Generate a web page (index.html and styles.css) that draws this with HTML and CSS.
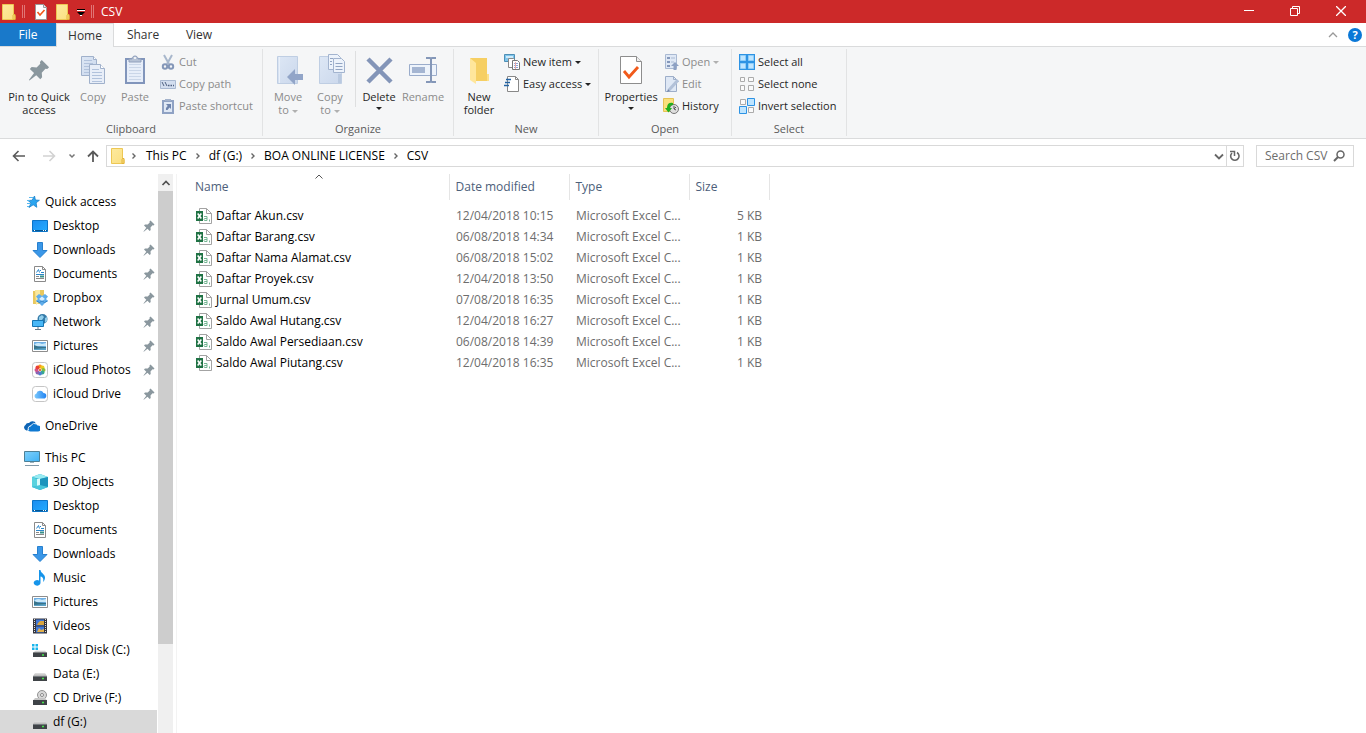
FILE: index.html
```html
<!DOCTYPE html>
<html lang="en">
<head>
<meta charset="utf-8">
<title>CSV</title>
<link rel="stylesheet" href="styles.css">
</head>
<body>
<svg class="sprite" aria-hidden="true">
  <defs>
    <linearGradient id="gPage" x1="0" y1="0" x2="1" y2="1"><stop offset="0" stop-color="#dde7f5"/><stop offset="1" stop-color="#cbd8ec"/></linearGradient>
    <linearGradient id="gFold" x1="0" y1="0" x2="1" y2="1"><stop offset="0" stop-color="#fdea9e"/><stop offset="1" stop-color="#fbdf80"/></linearGradient>
    <linearGradient id="gBlue" x1="0" y1="0" x2="1" y2="1"><stop offset="0" stop-color="#1b8df0"/><stop offset="1" stop-color="#24acff"/></linearGradient>
    <linearGradient id="gScreen" x1="0" y1="0" x2="1" y2="1"><stop offset="0" stop-color="#7fd0fb"/><stop offset="1" stop-color="#3fb2f5"/></linearGradient>
    <linearGradient id="gCloud" x1="0" y1="0" x2="1" y2="0"><stop offset="0" stop-color="#7cc9fb"/><stop offset="1" stop-color="#2183f3"/></linearGradient>
    <linearGradient id="gDisk" x1="0" y1="0" x2="0" y2="1"><stop offset="0" stop-color="#e4e4e4"/><stop offset="1" stop-color="#b5b5b5"/></linearGradient>
  </defs>
  <symbol id="folder" viewBox="0 0 16 16"><path d="M1.500.5h11v11h1.500v4H1.500z" fill="url(#gFold)" stroke="#edc754"/><path d="M12.500 10.500h1.500v5h-2v-4z" fill="#f8dc7b" stroke="#e3b43a"/></symbol>
  <symbol id="check" viewBox="0 0 16 16"><path d="M2.500.5h8l3 3v12h-11z" fill="#fff" stroke="#9a9a9a"/><path d="M10.500.5v3h3" fill="#eee" stroke="#9a9a9a"/><path d="m4.500 8 2.500 3L11.500 6" fill="none" stroke="#f1591c" stroke-width="1.600"/></symbol>
  <symbol id="pin" viewBox="0 0 12 12"><path d="M7.500.5l4 4-1 1-1-.2-2 2.200L7.700 10l-1 1L4.500 8.800.8 11.700l-.3-.3L3.300 7.700 1 5.400l1-1 2.700.2 2-2-.2-1z" fill="#8a979e"/></symbol>
  <symbol id="copy" viewBox="0 0 32 32"><g fill="url(#gPage)" stroke="#a0b1cb"><path d="M4.500 2.500h12l3 3v16h-15z"/><path d="M12.500 10.500h11l4 4v15h-15z" fill="#e8eef8"/><path d="M23.500 10.500v4h4M16.500 2.500v3h3" fill="#fff"/><path d="M7 6.500h8M7 9.500h9M7 12.500h5M7 15.500h5M7 18.500h5M15 15.500h7M15 18.500h10M15 21.500h10M15 24.500h10M15 27.500h10" stroke="#b1c2dc"/></g></symbol>
  <symbol id="paste" viewBox="0 0 32 32"><path d="M6 4h20v26H6z" fill="#8195bb"/><path d="M8 6h16v22H8z" fill="#e7eef9"/><path d="M10 10.500h12M10 13.500h12M10 16.500h12M10 19.500h12M10 22.500h12M10 25.500h12" stroke="#cad6e8"/><path d="M10 8V5h3c0-4 6-4 6 0h3v3z" fill="#b6c2d5" stroke="#91a0bc"/><circle cx="16" cy="4" r="1" fill="#fff"/></symbol>
  <symbol id="cut" viewBox="0 0 16 16"><path d="M4 1l5 9M12 1L7 10" stroke="#a8b7cc" stroke-width="2"/><g fill="none" stroke="#8497b8" stroke-width="2"><circle cx="5" cy="12.500" r="2.200"/><circle cx="11" cy="12.500" r="2.200"/></g></symbol>
  <symbol id="path" viewBox="0 0 16 16"><path d="M.5 4.500h15v8H.5z" fill="#d3deef" stroke="#a9b9d1"/><path d="M2 6l2 4M5 6l2 4" stroke="#4f6181"/><path d="M8 9.500h1.500M10.500 9.500H12M13 9.500h1" stroke="#4f6181" stroke-width="1.500"/></symbol>
  <symbol id="shortcut" viewBox="0 0 16 16"><path d="M2 2h12v14H2z" fill="#8fa2c4"/><path d="M4 4h8v10H4z" fill="#dfe8f5"/><path d="M5 3V1h6v2z" fill="#a3b2cb"/><path d="M6 6h5v5L9.500 9.500 7.500 12 6 12c-.5-2 .5-3 1.800-4z" fill="#6e84ad"/></symbol>
  <symbol id="move" viewBox="0 0 32 32"><path d="M5.500 2.500h20v27h-20z" fill="url(#gPage)" stroke="#bfcee3"/><path d="M7.500 3v26" stroke="#e9f0fa"/><path d="M15 23l8-8v5h8v6h-8v5z" fill="#92a5c8"/></symbol>
  <symbol id="copyto" viewBox="0 0 32 32"><path d="M5.500 2.500h20l2 17v10h-22z" fill="url(#gPage)" stroke="#bfcee3"/><path d="M24 20h3v9h-3z" fill="#b9c9e0"/><g stroke="#a3b4cf" fill="#edf3fb"><path d="M14.500.5h9l3 3v12h-12z"/><path d="M19.500 4.500h8l3 3v11h-11z"/><path d="M16 4.500h3M16 7.500h2M16 10.500h2M21.500 9.500h7M21.500 12.500h7M21.500 15.500h7" stroke="#92a5c3"/></g></symbol>
  <symbol id="delete" viewBox="0 0 32 32"><path d="M5 5l23 23M28 5L5 28" stroke="#8395b8" stroke-width="4.500"/></symbol>
  <symbol id="rename" viewBox="0 0 32 32"><path d="M2.500 10.500h27v11h-27z" fill="#edf3fb" stroke="#9aaccb"/><path d="M5 13h13v6H5z" fill="#a4b5d2"/><path d="M19 4h4q1 0 1 2v20q0 2-1 2h-4M29 4h-4q-1 0-1 2M24 26q0 2 1 2h4" fill="none" stroke="#8497b8" stroke-width="2"/></symbol>
  <symbol id="newfolder" viewBox="0 0 32 32"><path d="M7 4h17v19l2 1v3H12z" fill="#f6cf63"/><path d="M7 4l6 5v21l-6-4z" fill="#ffe69b"/><path d="M24 20h2v7h-2z" fill="#fde18a"/></symbol>
  <symbol id="properties" viewBox="0 0 32 32"><path d="M5.500 2.500h16l5 5v22h-21z" fill="#fff" stroke="#8d8d8d"/><path d="M21.500 2.500v5h5" fill="#eee" stroke="#8d8d8d"/><path d="M9 17l5 6 9-10" fill="none" stroke="#f15a1b" stroke-width="2.800"/></symbol>
  <symbol id="newitem" viewBox="0 0 16 16"><path d="M.5.5h10v7H.5z" fill="#7ec5ec" stroke="#4f8fb5"/><path d="M2 2h7v2H2z" fill="#cdeafa"/><path d="M4.500 4.500h5l2 2v7h-7z" fill="#fff" stroke="#888"/><path d="M8.500 6.500h5l2 2v7h-7z" fill="#fff" stroke="#777"/><path d="M10 9.500h4M10 11.500h4M10 13.500h4" stroke="#8ca5d7"/><path d="M11.500 8v7" stroke="#edaaa7"/></symbol>
  <symbol id="easy" viewBox="0 0 16 16"><path d="M3.500.5h8l3 3v12h-11z" fill="#fff" stroke="#888"/><path d="M11.500.5v3h3" fill="none" stroke="#888"/><path d="M2 3.500h5M1 6.500h5M0 9.500h5" stroke="#2363a3" stroke-width="1.400"/></symbol>
  <symbol id="open" viewBox="0 0 16 16"><path d="M2.500.5h11v14h-11z" fill="#dfe8f5" stroke="#a9b9d2"/><path d="M4 3h3v2H4zM4 7h3v2H4zM4 11h3v2H4z" fill="#8598bb"/><path d="M8 4h4M8 8h3" stroke="#aabad2"/><path d="M12 8l4 4h-2.500v4h-3v-4H8z" fill="#8ea1c3"/></symbol>
  <symbol id="edit" viewBox="0 0 16 16"><path d="M2.500.5h8l3 3v12h-11z" fill="#dfe8f5" stroke="#9daec9"/><path d="M10.500.5v3h3" fill="none" stroke="#9daec9"/><path d="M6 14l9-10" stroke="#b2c1d8" stroke-width="3"/><path d="M4 16l3-1-2-2z" fill="#7488ac"/></symbol>
  <symbol id="history" viewBox="0 0 16 16"><path d="M.5.5h10v13H.5z" fill="#fae07c" stroke="#e6c354"/><circle cx="11" cy="11" r="4.500" fill="#dedede" stroke="#777"/><path d="M11 8v3l2-2M11 11l2 1" stroke="#555" fill="none"/><path d="M10 5q-6-1-6 5l-2 0 3.500 4.500L9 10H7q0-3 3-3z" fill="#22b01f"/></symbol>
  <symbol id="selall" viewBox="0 0 16 16"><path d="M0 0h16v16H0z" fill="#2d93e4"/><path d="M1.500 1.500h5v5h-5zM9.500 1.500h5v5h-5zM1.500 9.500h5v5h-5zM9.500 9.500h5v5h-5z" fill="#bfe5ff" stroke="#8fcdf8"/></symbol>
  <symbol id="selnone" viewBox="0 0 16 16"><path d="M1.500 1.500h4v4h-4zM9.500 1.500h5v4h-5zM1.500 9.500h4v5h-4zM9.500 9.500h5v5h-5z" fill="#fafafa" stroke="#ababab"/></symbol>
  <symbol id="selinv" viewBox="0 0 16 16"><path d="M1.500 1.500h5v5h-5zM9.500 9.500h5v5h-5z" fill="#fafafa" stroke="#ababab"/><path d="M8.500.5h7v7h-7zM.5 8.500h7v7h-7z" fill="#bfe5ff" stroke="#2d93e4"/></symbol>
  <symbol id="star" viewBox="0 0 16 16"><path d="M10.500 2l.9 4 4 .3-3.300 2.500.7 4.500-3.600-2.500L5 13.500 7 9 4 6.500l4.100-.3z" fill="#2ba5ef" stroke="#1580cd" stroke-width=".8"/><path d="M5 3.500h4M3 6.500h3M3 9.500h3M3 12.500h2" stroke="#58b8ef"/></symbol>
  <symbol id="desktop" viewBox="0 0 16 16"><path d="M.5 2.500h15v11H.5z" fill="url(#gBlue)" stroke="#0c75c8"/><path d="M1 12.500h14" stroke="#075590"/><path d="M2 12.500h1M11 12.500h1M13 12.500h1" stroke="#fff"/></symbol>
  <symbol id="down" viewBox="0 0 16 16"><path d="M5.500.5h5v8h4.500L8 15.500 1 8.500h4.500z" fill="#3a97e8" stroke="#2780cf"/></symbol>
  <symbol id="doc" viewBox="0 0 16 16"><path d="M2.500.5h8l3 3v12h-11z" fill="#fff" stroke="#8a8a8a"/><path d="M10.500.5v3h3" fill="none" stroke="#8a8a8a"/><path d="M4.500 6.500l2-3 1 3M8 4.500h1M9 6.500h3M4 8.500h8" stroke="#2b86cb" fill="none"/><path d="M4 10.500h3M4 12.500h8" stroke="#888"/><path d="M8 9.500h4v2H8z" fill="#388e88"/></symbol>
  <symbol id="dropbox" viewBox="0 0 16 16"><path d="M1 1h5l1-1h5v14H1z" fill="#e9c85e"/><path d="M3 0h5v12l-4 3z" fill="#fae9a0"/><path d="M7 4l3 2 3-2 3 2.500L14 9l2 2-3 2-3 3-3-3-3-2 2-2-2-2.500z" fill="#5fadeb"/><path d="M10 6.500l3 2.500-3 2-3-2z" fill="#d9efff"/><path d="M4.500 11l3 1.500L10 11l2.500 1.500 3-1.500" stroke="#3585c6" fill="none"/></symbol>
  <symbol id="network" viewBox="0 0 16 16"><circle cx="10.500" cy="5" r="5" fill="#357ba9"/><path d="M7 3l3-2 2 2-2 3H7zM13 4l2-1v4l-2 2z" fill="#91ceeb"/><path d="M.5 6.500h11v6H.5z" fill="#49b8f7" stroke="#1676b3"/><path d="M6 13v2M3 15.500h6" stroke="#647b8a"/></symbol>
  <symbol id="pic" viewBox="0 0 16 16"><path d="M.5 2.500h15v11H.5z" fill="#fff" stroke="#8d8d8d"/><path d="M2 4h12v8H2z" fill="#6eafe4"/><path d="M3 6q3-2 7 0l4-1v3H2z" fill="#c9e8f9"/><path d="M2 7l4 1.500 8 .5v3H2z" fill="#38738a"/><path d="M2 11l12-1v2H2z" fill="#5aa3c7"/></symbol>
  <symbol id="photos" viewBox="0 0 16 16"><rect x=".5" y=".5" width="15" height="15" rx="3" fill="#fff" stroke="#c5c5c5"/><g><circle cx="8" cy="4.500" r="2" fill="#f99a1c"/><circle cx="10.500" cy="5.500" r="2" fill="#edc91f"/><circle cx="11.500" cy="8" r="2" fill="#89bd3d"/><circle cx="10.500" cy="10.500" r="2" fill="#38a892"/><circle cx="8" cy="11.500" r="2" fill="#4a82cf"/><circle cx="5.500" cy="10.500" r="2" fill="#8a65b2"/><circle cx="4.500" cy="8" r="2" fill="#d0538d"/><circle cx="5.500" cy="5.500" r="2" fill="#eb4235"/><circle cx="8" cy="8" r="1.200" fill="#eb6a41"/></g></symbol>
  <symbol id="icloud" viewBox="0 0 16 16"><rect x=".5" y=".5" width="15" height="15" rx="3" fill="#fff" stroke="#c5c5c5"/><path d="M4.300 12.500a2.500 2.500 0 0 1 0-4.800 3.900 3.900 0 0 1 7.200-.8A2.700 2.700 0 0 1 11.500 12.500z" fill="url(#gCloud)"/></symbol>
  <symbol id="onedrive" viewBox="0 0 16 16"><path d="M2.500 12.500A3 3 0 0 1 1.500 7 3 3 0 0 1 5 5 4.200 4.200 0 0 1 12 5.500Q8 5 6.500 8 4 8 3.500 12.500z" fill="#0d64b5"/><path d="M6.500 13.500a2.500 2.500 0 0 1 0-5 3.800 3.800 0 0 1 7-1A3 3 0 0 1 14 13.500z" fill="#0f79d1"/><path d="M4.500 12Q3.500 8.500 7 7.500 9 4 12.500 6" fill="none" stroke="#fff" stroke-width=".8"/></symbol>
  <symbol id="pc" viewBox="0 0 16 16"><path d="M.5 1.500h15v10H.5z" fill="url(#gScreen)" stroke="#4d8096"/><path d="M6 12.500h4" stroke="#9db2bd"/><path d="M1 15.500h14" stroke="#8299a8" /></symbol>
  <symbol id="cube" viewBox="0 0 16 16"><path d="M8 0l8 3v10l-8 3-8-3V3z" fill="#2aaecc"/><path d="M8 0l8 3-8 2-8-2z" fill="#98ebf2"/><path d="M0 3l5 2v7l-5 1z" fill="#59d2de"/><path d="M5 5l3-.5V13l-3-1z" fill="#d9fbfb"/><path d="M8 5l8-2v10l-8 0z" fill="#1c94bd"/><path d="M0 13l8-2 8 2-8 3z" fill="#47c5da"/></symbol>
  <symbol id="music" viewBox="0 0 16 16"><path d="M7 0h1.500c0 3 4.500 4 4.500 7.500 0 2-1 3.500-2 4.500 1-4-.5-5-2.500-5.500v6.500A3.400 2.800 0 1 1 7 10.500z" fill="#1594ea"/></symbol>
  <symbol id="video" viewBox="0 0 16 16"><path d="M1 .5h14v15H1z" fill="#35353d"/><path d="M4 1.500h8v6H4zM4 8.500h8v6H4z" fill="#3f78da"/><path d="M8 3h4v4H5l1-2z" fill="#d8a43f"/><path d="M7 10l2 2 3-1v3H5z" fill="#e2b04c"/><path d="M2.500 1v14M13.500 1v14" stroke="#ddd" stroke-dasharray="1 1"/></symbol>
  <symbol id="disk" viewBox="0 0 16 16"><path d="M3 7h10l2 3H1z" fill="url(#gDisk)"/><path d="M1 10h14v5H1z" fill="#3f4347"/><path d="M1 10.500h14" stroke="#74797d"/><path d="M10 12.500h2" stroke="#45e84b" stroke-width="1.500"/></symbol>
  <symbol id="cdrive" viewBox="0 0 16 16"><circle cx="10" cy="5" r="4.500" fill="#d8d8d8" stroke="#929292"/><circle cx="10" cy="5" r="1.500" fill="#fff" stroke="#888"/><path d="M3 8h10l2 2.500H1z" fill="#c5c5c5"/><path d="M1 10h14v5H1z" fill="#3f4347"/><path d="M10 12.500h2" stroke="#45e84b" stroke-width="1.500"/></symbol>
  <symbol id="windisk" viewBox="0 0 16 16"><path d="M0 2h2.500v2.500H0zM3.500 2H6v2.500H3.500zM0 5.500h2.500V8H0zM3.500 5.500H6V8H3.500z" fill="#19b5ec"/><path d="M4 8.500h9l2 2.500H1l2-2z" fill="url(#gDisk)"/><path d="M1 10.500h14V15H1z" fill="#3f4347"/><path d="M10 13h2" stroke="#45e84b" stroke-width="1.500"/></symbol>
  <symbol id="csv" viewBox="0 0 16 16"><path d="M3.500.5h7l5 5v10h-12z" fill="#fff" stroke="#a3a3a3"/><path d="M10.500.5v5h5" fill="none" stroke="#a3a3a3"/><path d="M0 3h7v10H0z" fill="#1f7244"/><path d="M1.700 5.500l3.600 5M5.300 5.500l-3.600 5" stroke="#fff" stroke-width="1.500"/><path d="M8 8.500h3v4H8.500q-1-1 0-2H11M13.500 11.500v2" fill="none" stroke="#75b593"/></symbol>
  <symbol id="chev" viewBox="0 0 8 8"><path d="M2.500 1.500L5 4 2.500 6.500" fill="none" stroke="#666" stroke-width="1.400"/></symbol>
</svg>

<header class="titlebar">
  <svg class="i16"><use href="#folder"/></svg>
  <span class="grip"></span>
  <button class="qbtn" aria-label="Properties"><svg class="i16"><use href="#check"/></svg></button>
  <button class="qbtn" aria-label="New folder"><svg class="i16"><use href="#folder"/></svg></button>
  <button class="qmore" aria-label="Customize toolbar"><svg width="8" height="8" viewBox="0 0 8 8"><path d="M0 1.500h8" stroke="#000"/><path d="M0 2.500h8" stroke="#fff"/><path d="M0 4h8L4 8z" fill="#000"/><path d="M3 7.500h2" stroke="#fff"/></svg></button>
  <span class="grip"></span>
  <h1 class="title">CSV</h1>
  <div class="wincontrols">
    <button aria-label="Minimize"><svg width="10" height="10" viewBox="0 0 10 10"><path d="M0 4.500h10"/></svg></button>
    <button aria-label="Restore"><svg width="10" height="10" viewBox="0 0 10 10"><path d="M.5 2.500h7v7h-7zM2.500 2V.5h7v7H8"/></svg></button>
    <button aria-label="Close"><svg width="10" height="10" viewBox="0 0 10 10"><path d="M0 0l10 10M10 0L0 10" stroke-width="1.300"/></svg></button>
  </div>
</header>

<nav class="tabs">
  <button class="tab file">File</button>
  <button class="tab active">Home</button>
  <button class="tab">Share</button>
  <button class="tab">View</button>
  <div class="tabend">
    <button aria-label="Collapse ribbon"><svg width="10" height="6" viewBox="0 0 10 6"><path d="M1 5l4-4 4 4" fill="none" stroke="#999" stroke-width="1.300"/></svg></button>
    <button class="help" aria-label="Help">?</button>
  </div>
</nav>

<section class="ribbon">
  <div class="group clipboard">
    <div class="tools">
      <button class="big wide"><svg class="i32 pinbig"><use href="#pin"/></svg><span>Pin to Quick</span><span>access</span></button>
      <button class="big slim off"><svg class="i32"><use href="#copy"/></svg><span>Copy</span></button>
      <button class="big mid off"><svg class="i32"><use href="#paste"/></svg><span>Paste</span></button>
      <div class="stack">
        <button class="small off"><svg class="i16"><use href="#cut"/></svg>Cut</button>
        <button class="small off"><svg class="i16"><use href="#path"/></svg>Copy path</button>
        <button class="small off"><svg class="i16"><use href="#shortcut"/></svg>Paste shortcut</button>
      </div>
    </div>
    <div class="caption">Clipboard</div>
  </div>
  <div class="group organize">
    <div class="tools">
      <button class="big off"><svg class="i32"><use href="#move"/></svg><span>Move</span><span>to <i class="caret"></i></span></button>
      <button class="big off"><svg class="i32"><use href="#copyto"/></svg><span>Copy</span><span>to <i class="caret"></i></span></button>
      <span class="rule"></span>
      <button class="big"><svg class="i32"><use href="#delete"/></svg><span>Delete</span><i class="caret below"></i></button>
      <button class="big mid off"><svg class="i32"><use href="#rename"/></svg><span>Rename</span></button>
    </div>
    <div class="caption">Organize</div>
  </div>
  <div class="group new">
    <div class="tools">
      <button class="big"><svg class="i32"><use href="#newfolder"/></svg><span>New</span><span>folder</span></button>
      <div class="stack">
        <button class="small"><svg class="i16"><use href="#newitem"/></svg>New item <i class="caret"></i></button>
        <button class="small"><svg class="i16"><use href="#easy"/></svg>Easy access <i class="caret"></i></button>
      </div>
    </div>
    <div class="caption">New</div>
  </div>
  <div class="group open">
    <div class="tools">
      <button class="big props"><svg class="i32"><use href="#properties"/></svg><span>Properties</span><i class="caret below"></i></button>
      <div class="stack">
        <button class="small off"><svg class="i16"><use href="#open"/></svg>Open <i class="caret"></i></button>
        <button class="small off"><svg class="i16"><use href="#edit"/></svg>Edit</button>
        <button class="small"><svg class="i16"><use href="#history"/></svg>History</button>
      </div>
    </div>
    <div class="caption">Open</div>
  </div>
  <div class="group select">
    <div class="tools">
      <div class="stack">
        <button class="small"><svg class="i16"><use href="#selall"/></svg>Select all</button>
        <button class="small"><svg class="i16"><use href="#selnone"/></svg>Select none</button>
        <button class="small"><svg class="i16"><use href="#selinv"/></svg>Invert selection</button>
      </div>
    </div>
    <div class="caption">Select</div>
  </div>
</section>

<div class="navbar">
  <div class="arrows">
    <button aria-label="Back"><svg width="14" height="12" viewBox="0 0 14 12"><path d="M13 6H1.500M6.500 1l-5 5 5 5" fill="none" stroke="#5a5a5a" stroke-width="1.600"/></svg></button>
    <button aria-label="Forward"><svg width="14" height="12" viewBox="0 0 14 12"><path d="M1 6h11.500M7.500 1l5 5-5 5" fill="none" stroke="#d2d2d2" stroke-width="1.600"/></svg></button>
    <button class="recent" aria-label="Recent locations"><svg width="8" height="6" viewBox="0 0 8 6"><path d="M1.500 1.500L4 4l2.500-2.500" fill="none" stroke="#777" stroke-width="1.500"/></svg></button>
    <button class="up" aria-label="Up"><svg width="12" height="12" viewBox="0 0 12 12"><path d="M6 12V1.500M1 6.500l5-5 5 5" fill="none" stroke="#5a5a5a" stroke-width="1.800"/></svg></button>
  </div>
  <div class="address">
    <svg class="i16"><use href="#folder"/></svg>
    <svg class="chev"><use href="#chev"/></svg><a href="#">This PC</a>
    <svg class="chev"><use href="#chev"/></svg><a href="#">df (G:)</a>
    <svg class="chev"><use href="#chev"/></svg><a href="#">BOA ONLINE LICENSE</a>
    <svg class="chev"><use href="#chev"/></svg><a href="#">CSV</a>
    <button class="drop" aria-label="Previous locations"><svg width="10" height="7" viewBox="0 0 10 7"><path d="M1 1.500l4 4 4-4" fill="none" stroke="#666" stroke-width="1.800"/></svg></button>
    <button class="refresh" aria-label="Refresh"><svg width="12" height="12" viewBox="0 0 12 12"><path d="M8 2.500A4.200 4.200 0 1 1 3 3" fill="none" stroke="#666" stroke-width="1.600"/><path d="M1 1.500h4.500V6" fill="none" stroke="#666" stroke-width="1.500"/></svg></button>
  </div>
  <div class="search">
    <input type="text" placeholder="Search CSV" aria-label="Search CSV">
    <svg width="12" height="12" viewBox="0 0 12 12"><circle cx="7.500" cy="4.500" r="3.500" fill="none" stroke="#666" stroke-width="1.500"/><path d="M5 7L1 11" stroke="#666" stroke-width="1.900"/></svg>
  </div>
</div>

<main class="body">
  <nav class="tree">
    <a class="root" href="#"><svg class="i16"><use href="#star"/></svg>Quick access</a>
    <a href="#"><svg class="i16"><use href="#desktop"/></svg>Desktop<svg class="pin"><use href="#pin"/></svg></a>
    <a href="#"><svg class="i16"><use href="#down"/></svg>Downloads<svg class="pin"><use href="#pin"/></svg></a>
    <a href="#"><svg class="i16"><use href="#doc"/></svg>Documents<svg class="pin"><use href="#pin"/></svg></a>
    <a href="#"><svg class="i16"><use href="#dropbox"/></svg>Dropbox<svg class="pin"><use href="#pin"/></svg></a>
    <a href="#"><svg class="i16"><use href="#network"/></svg>Network<svg class="pin"><use href="#pin"/></svg></a>
    <a href="#"><svg class="i16"><use href="#pic"/></svg>Pictures<svg class="pin"><use href="#pin"/></svg></a>
    <a href="#"><svg class="i16"><use href="#photos"/></svg>iCloud Photos<svg class="pin"><use href="#pin"/></svg></a>
    <a href="#"><svg class="i16"><use href="#icloud"/></svg>iCloud Drive<svg class="pin"><use href="#pin"/></svg></a>
    <a class="root later" href="#"><svg class="i16"><use href="#onedrive"/></svg>OneDrive</a>
    <a class="root later" href="#"><svg class="i16"><use href="#pc"/></svg>This PC</a>
    <a href="#"><svg class="i16"><use href="#cube"/></svg>3D Objects</a>
    <a href="#"><svg class="i16"><use href="#desktop"/></svg>Desktop</a>
    <a href="#"><svg class="i16"><use href="#doc"/></svg>Documents</a>
    <a href="#"><svg class="i16"><use href="#down"/></svg>Downloads</a>
    <a href="#"><svg class="i16"><use href="#music"/></svg>Music</a>
    <a href="#"><svg class="i16"><use href="#pic"/></svg>Pictures</a>
    <a href="#"><svg class="i16"><use href="#video"/></svg>Videos</a>
    <a href="#"><svg class="i16"><use href="#windisk"/></svg>Local Disk (C:)</a>
    <a href="#"><svg class="i16"><use href="#disk"/></svg>Data (E:)</a>
    <a href="#"><svg class="i16"><use href="#cdrive"/></svg>CD Drive (F:)</a>
    <a class="current" href="#"><svg class="i16"><use href="#disk"/></svg>df (G:)</a>
  </nav>
  <div class="scrollbar">
    <button aria-label="Scroll up"><svg width="10" height="6" viewBox="0 0 10 6"><path d="M1.500 5L5 1.500 8.500 5" fill="none" stroke="#505050" stroke-width="1.700"/></svg></button>
    <div class="thumb"></div>
  </div>
  <div class="files">
    <table>
      <colgroup><col class="cname"><col class="cmid"><col class="cmid"><col class="csize"></colgroup>
      <thead>
        <tr><th class="sorted">Name<svg class="sort" width="8" height="5" viewBox="0 0 8 5"><path d="M.5 4.500L4 1l3.500 3.500" fill="none" stroke="#555"/></svg></th><th>Date modified</th><th>Type</th><th>Size</th></tr>
      </thead>
      <tbody>
        <tr><td><svg class="i16"><use href="#csv"/></svg>Daftar Akun.csv</td><td>12/04/2018 10:15</td><td>Microsoft Excel C...</td><td>5 KB</td></tr>
        <tr><td><svg class="i16"><use href="#csv"/></svg>Daftar Barang.csv</td><td>06/08/2018 14:34</td><td>Microsoft Excel C...</td><td>1 KB</td></tr>
        <tr><td><svg class="i16"><use href="#csv"/></svg>Daftar Nama Alamat.csv</td><td>06/08/2018 15:02</td><td>Microsoft Excel C...</td><td>1 KB</td></tr>
        <tr><td><svg class="i16"><use href="#csv"/></svg>Daftar Proyek.csv</td><td>12/04/2018 13:50</td><td>Microsoft Excel C...</td><td>1 KB</td></tr>
        <tr><td><svg class="i16"><use href="#csv"/></svg>Jurnal Umum.csv</td><td>07/08/2018 16:35</td><td>Microsoft Excel C...</td><td>1 KB</td></tr>
        <tr><td><svg class="i16"><use href="#csv"/></svg>Saldo Awal Hutang.csv</td><td>12/04/2018 16:27</td><td>Microsoft Excel C...</td><td>1 KB</td></tr>
        <tr><td><svg class="i16"><use href="#csv"/></svg>Saldo Awal Persediaan.csv</td><td>06/08/2018 14:39</td><td>Microsoft Excel C...</td><td>1 KB</td></tr>
        <tr><td><svg class="i16"><use href="#csv"/></svg>Saldo Awal Piutang.csv</td><td>12/04/2018 16:35</td><td>Microsoft Excel C...</td><td>1 KB</td></tr>
      </tbody>
    </table>
  </div>
</main>
</body>
</html>
```
FILE: styles.css
```css
* { box-sizing: border-box; }
body {
  margin: 0;
  height: 100vh;
  display: flex;
  flex-direction: column;
  overflow: hidden;
  background: #fff;
  color: #000;
  font: 12px/16px "Open Sans", "Noto Sans", sans-serif;
}
button, input { font: inherit; color: inherit; border: 0; background: none; padding: 0; }
a { color: inherit; text-decoration: none; }
.sprite { position: absolute; width: 0; height: 0; }
svg { display: block; flex: none; }
.i16 { width: 16px; height: 16px; }
.i32 { width: 32px; height: 32px; }

/* Title bar */
.titlebar { display: flex; align-items: center; height: 23px; flex: none; background: #cc2929; color: #fff; padding-left: 1px; }
.grip { width: 3px; height: 13px; margin: 0 4px; border: solid #e07676; border-width: 0 1px; }
.titlebar > .i16 + .grip { margin: 0 8px 0 5px; }
.qbtn { margin-right: 6px; }
.qmore { width: 8px; margin: 0 2px 0 0; }
.title { margin: 0 0 0 3px; font-size: 12px; font-weight: 400; }
.wincontrols { display: flex; margin-left: auto; height: 100%; padding-right: 2px; }
.wincontrols button { width: 46px; padding-bottom: 2px; display: grid; place-items: center; }
.wincontrols path { fill: none; stroke: #fff; }

/* Tabs */
.tabs { display: flex; height: 24px; flex: none; border-bottom: 1px solid #dadbdc; color: #333; }
.tab { width: 56px; height: 23px; padding-left: 2px; }
.tab.file { background: #1979ca; color: #fff; padding: 0; }
.tab.active { width: 58px; height: 24px; background: #f5f6f7; border: solid #dadbdc; border-width: 1px 1px 0; padding: 0; }
.tabend { margin-left: auto; display: flex; align-items: center; gap: 10px; padding-right: 4px; }
.help { width: 14px; height: 14px; border-radius: 50%; background: #0a78d7; color: #fff; font-size: 11px; line-height: 14px; font-weight: 700; }

/* Ribbon */
.ribbon { display: flex; height: 92px; flex: none; background: #f5f6f7; border-bottom: 1px solid #dadbdc; color: #262626; padding: 2px 0; font-size: 11px; }
.group { display: flex; flex-direction: column; border-right: 1px solid #e2e3e4; padding-top: 2px; }
.clipboard { width: 263px; }
.organize { width: 191px; }
.new { width: 145px; }
.open { width: 133px; }
.select { width: 115px; }
.tools { display: flex; flex: 1; padding-left: 4px; }
.caption { text-align: center; color: #5a5a5a; height: 14px; line-height: 14px; }
.big { width: 42px; display: flex; flex-direction: column; align-items: center; padding-top: 3px; line-height: 13px; white-space: nowrap; }
.big > svg { margin-bottom: 4px; }
.big.wide { width: 70px; }
.big.slim { width: 38px; }
.big.mid { width: 46px; }
.big.props { width: 56px; }
.pinbig { padding: 5px; }
.off { color: #8b8b8b; }
.rule { width: 1px; height: 56px; margin: 0 2px 0 4px; background: #dedfe0; }
.stack { padding-left: 2px; }
.new .stack, .open .stack { padding-left: 4px; }
.select .stack { padding-left: 3px; }
.small { display: flex; align-items: center; gap: 3px; height: 22px; white-space: nowrap; }
.caret { display: inline-block; border: 3px solid transparent; border-top-color: #222; border-bottom: 0; vertical-align: middle; }
.caret.below { margin-top: 4px; }
.off .caret { border-top-color: #b0b0b0; }

/* Address row */
.navbar { display: flex; align-items: center; height: 34px; flex: none; padding-right: 12px; }
.arrows { display: flex; align-items: center; width: 106px; padding-left: 12px; }
.arrows button { margin-right: 16px; }
.arrows button + button { margin-right: 12px; }
.arrows button.recent { margin-right: 11px; }
.arrows button.up { margin: 0; }
.address { display: flex; align-items: center; flex: 1; height: 22px; border: 1px solid #d9d9d9; padding-left: 3px; white-space: nowrap; }
.chev { width: 8px; height: 8px; margin: 0 7px; }
.address .i16 + .chev { margin: 0 8px 0 4px; }
.drop { margin-left: auto; margin-right: 2px; }
.refresh { width: 17px; height: 20px; border-left: 1px solid #d9d9d9; display: grid; place-items: center; }
.search { display: flex; align-items: center; width: 98px; height: 22px; margin-left: 12px; border: 1px solid #d9d9d9; padding: 0 8px; }
.search input { flex: 1; min-width: 0; outline: 0; }
.search input::placeholder { color: #6d6d6d; opacity: 1; }

/* Body */
.body { display: flex; flex: 1; min-height: 0; padding-top: 1px; }
.tree { width: 158px; padding: 16px 1px 0 0; overflow: hidden; }
.tree a { display: flex; align-items: center; gap: 5px; height: 24px; padding-left: 32px; padding-right: 2px; white-space: nowrap; }
.tree .root { padding-left: 24px; }
.tree .later { margin-top: 8px; }
.tree .current { background: #d9d9d9; }
.pin { width: 12px; height: 12px; margin-left: auto; }
.scrollbar { width: 15px; background: #f0f0f0; }
.scrollbar button { width: 15px; height: 17px; display: grid; place-items: center; }
.thumb { height: 81%; background: #cdcdcd; }
.files { flex: 1; margin-left: 3px; border-left: 1px solid #f3f3f3; }
table { border-collapse: collapse; table-layout: fixed; width: 592px; }
.cname { width: 272px; }
.cmid { width: 120px; }
.csize { width: 80px; }
th { height: 26px; padding: 0 6px; text-align: left; font-weight: 400; color: #4c607a; border-right: 1px solid #e5e5e5; }
th.sorted { position: relative; padding-left: 18px; }
.sort { position: absolute; top: 0; left: 51%; }
tbody::before { content: ""; display: block; height: 5px; }
td { height: 21px; padding: 0 7px; color: #6d6d6d; white-space: nowrap; }
td:first-child { display: flex; align-items: center; gap: 4px; padding-left: 19px; color: #000; }
td:last-child { text-align: right; }
```
